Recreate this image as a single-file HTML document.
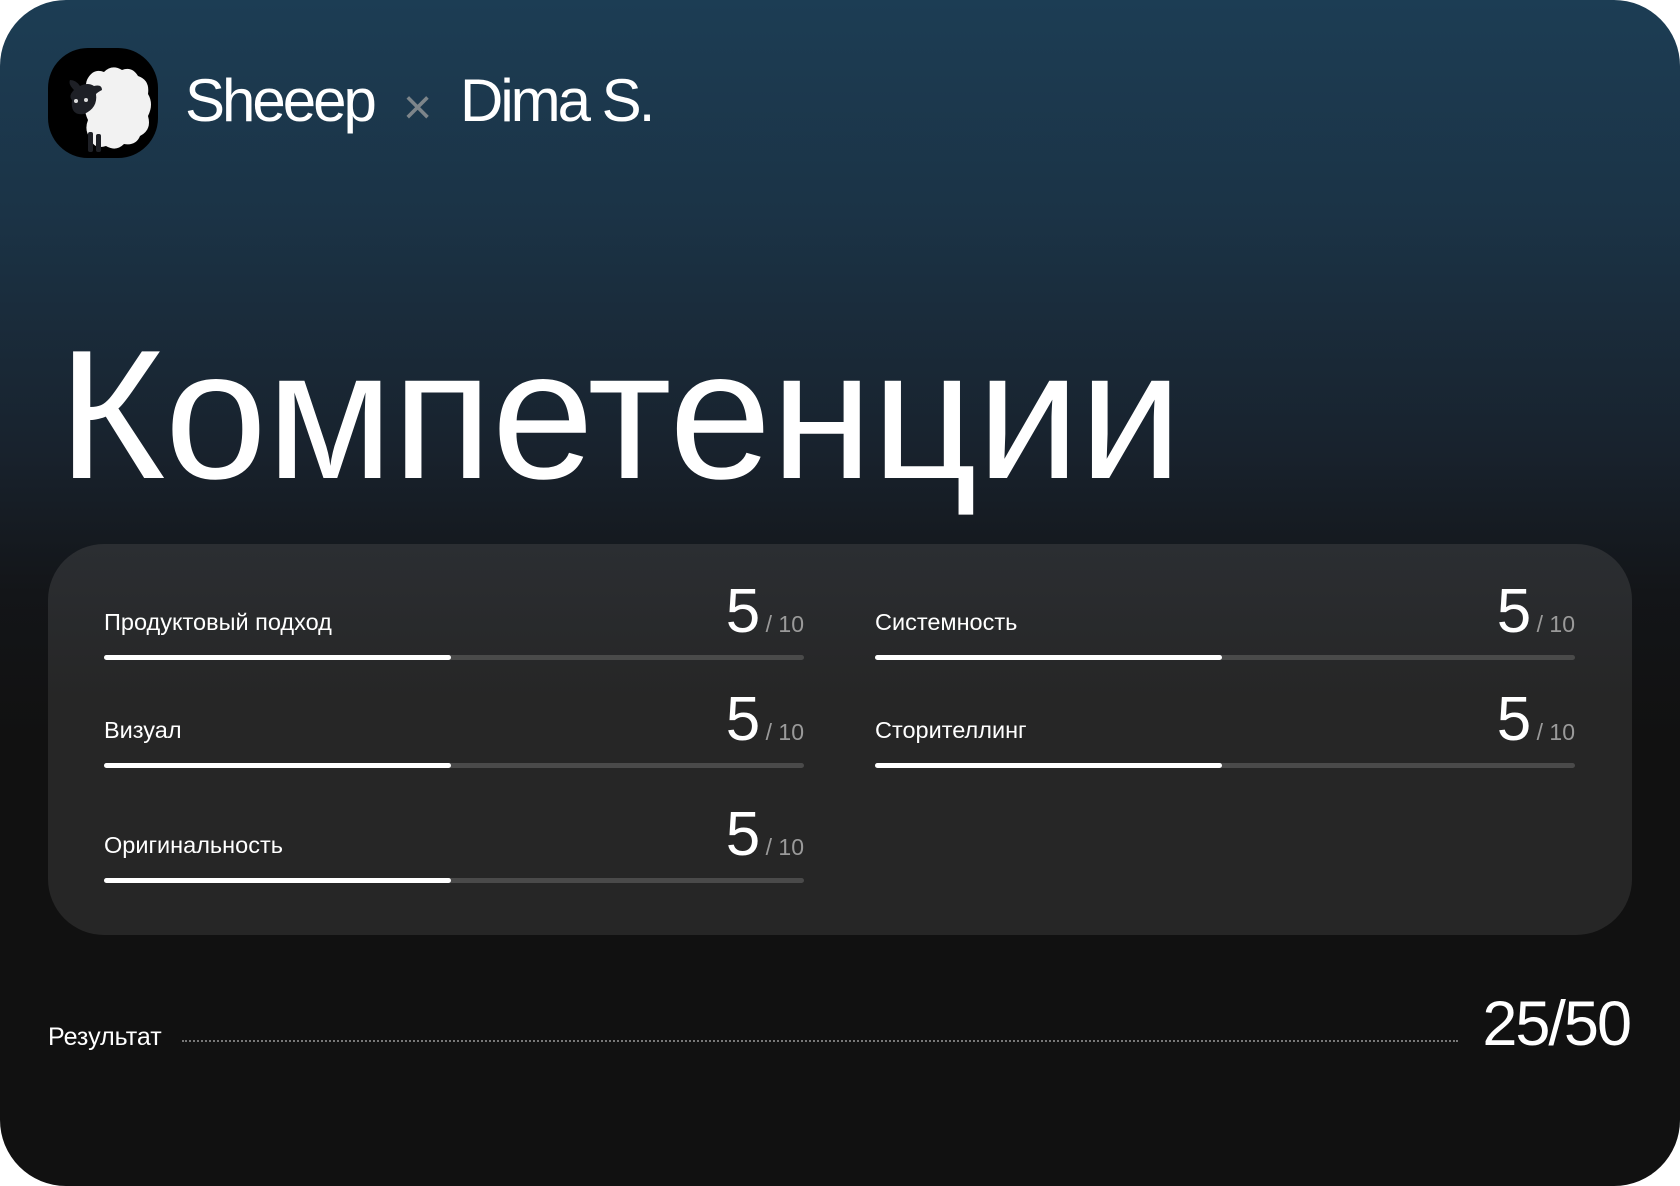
<!DOCTYPE html>
<html><head><meta charset="utf-8"><style>
*{margin:0;padding:0;box-sizing:border-box}
html,body{width:1680px;height:1186px;background:#fff;overflow:hidden;font-family:"Liberation Sans","DejaVu Sans",sans-serif;color:#fff}
.card{position:absolute;left:0;top:0;width:1680px;height:1186px;border-radius:66px;overflow:hidden;
background:linear-gradient(180deg,#1c3d54 0%,#1b3346 18%,#18222d 38%,#131518 50%,#111 62%,#111 100%)}
.abs{position:absolute;white-space:nowrap}
.head{font-size:60px;letter-spacing:-3px;top:66px;line-height:70px}
.title{left:58px;top:304px;font-size:184px;letter-spacing:-0.5px;line-height:220px;font-weight:400}
.panel{position:absolute;left:48px;top:544px;width:1584px;height:391px;border-radius:56px;background:linear-gradient(180deg,#2b2e32,#262626 40%,#262626)}
.lbl{font-size:23.5px;letter-spacing:0px}
.big{font-size:62px;letter-spacing:-1px}
.sm{font-size:23px;color:#9a9a9a}
.bar{position:absolute;height:5px;border-radius:3px;background:#4a4a4a;width:700px}
.bar i{position:absolute;left:0;top:0;height:5px;width:347px;border-radius:3px;background:#fff}
</style></head><body>
<div class="card">
 <svg class="abs" style="left:48px;top:48px" width="110" height="110" viewBox="0 0 110 110">
  <rect width="110" height="110" rx="40" fill="#000"/>
  <path d="M40 30 q6-10 16-6 q8-8 18-2 q10-4 16 6 q12 4 10 18 q6 10 0 22 q4 14-8 20 q-4 10-16 8 q-8 8-18 2 q-12 4-16-8 q-6-8 -2-18 q-6-12 0-24 q-4-12 0-18z" fill="#f2f2f2"/>
  <path d="M26 42 q-6-6-4-10 q6 0 10 6 q8-4 14 0 q8-2 8 4 q-4 2-6 4 q2 14-12 20 q-14 2-12-14 q-4-4 2-10z" fill="#1e2026"/>
  <circle cx="28" cy="53" r="2" fill="#ddd"/><circle cx="38" cy="52" r="2" fill="#ddd"/>
  <rect x="40" y="84" width="5" height="20" rx="2" fill="#1e2026"/><rect x="48" y="86" width="5" height="18" rx="2" fill="#1e2026"/>
 </svg>
 <div class="abs head" style="left:185px">Sheeep</div>
 <div class="abs head" style="left:403px;color:#7d858a;font-size:50px;top:72px">×</div>
 <div class="abs head" style="left:460px">Dima S.</div>
 <div class="abs title">Компетенции</div>
 <div class="panel"></div>

 <div class="abs lbl" style="left:104px;top:609px">Продуктовый подход</div>
 <div class="abs" style="right:876px;top:576px"><span class="big">5</span><span class="sm"> / 10</span></div>
 <div class="bar" style="left:104px;top:655px"><i></i></div>
 <div class="abs lbl" style="left:875px;top:609px">Системность</div>
 <div class="abs" style="right:105px;top:576px"><span class="big">5</span><span class="sm"> / 10</span></div>
 <div class="bar" style="left:875px;top:655px"><i></i></div>

 <div class="abs lbl" style="left:104px;top:717px">Визуал</div>
 <div class="abs" style="right:876px;top:684px"><span class="big">5</span><span class="sm"> / 10</span></div>
 <div class="bar" style="left:104px;top:763px"><i></i></div>
 <div class="abs lbl" style="left:875px;top:717px">Сторителлинг</div>
 <div class="abs" style="right:105px;top:684px"><span class="big">5</span><span class="sm"> / 10</span></div>
 <div class="bar" style="left:875px;top:763px"><i></i></div>

 <div class="abs lbl" style="left:104px;top:832px">Оригинальность</div>
 <div class="abs" style="right:876px;top:799px"><span class="big">5</span><span class="sm"> / 10</span></div>
 <div class="bar" style="left:104px;top:878px"><i></i></div>

 <div class="abs lbl" style="left:48px;top:1023px;font-size:25px">Результат</div>
 <div class="abs" style="left:182px;top:1040px;width:1276px;border-top:2px dotted #777"></div>
 <div class="abs" style="right:50px;top:988px;font-size:63px;letter-spacing:-2px">25/50</div>
</div>
</body></html>
